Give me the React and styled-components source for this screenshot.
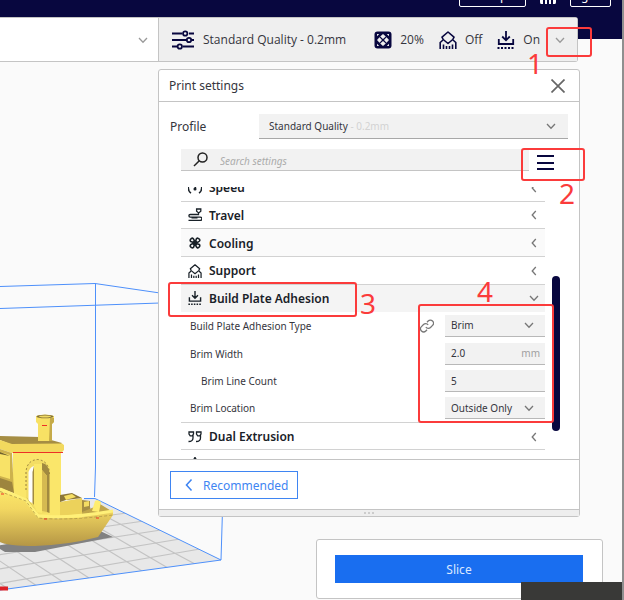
import React from "react";
import styled, { createGlobalStyle, css } from "styled-components";

const Global = createGlobalStyle`
  *, *::before, *::after { box-sizing: border-box; }
  body { margin: 0; background: #fafafa; }
  body, button, input, select { font-family: "Noto Sans", "Open Sans", sans-serif; }
  button, input, select { margin: 0; padding: 0; border: 0; color: inherit; background: none; border-radius: 0; outline: 0; }
`;

const NAVY = "#08073f";
const LINE = "#c4c4c4";
const BLUE = "#196ef0";
const RED = "#fb3b3b";
const SMALL = "10px";

const Page = styled.div`
  position: relative;
  min-height: 100vh;
  overflow: hidden;
  background: #fafafa;
  border-right: 2px solid #8f8f8f;
  color: #35353d;
  font-size: ${SMALL};
  line-height: 16px;
`;

const Scene = styled.svg`
  position: absolute;
  left: 0;
  bottom: 0;
  width: 240px;
  height: 330px;
`;

const TopBar = styled.header`
  display: flex;
  justify-content: flex-end;
  align-items: flex-start;
  gap: 13px;
  height: 39px;
  padding-right: 11px;
  background: ${NAVY};
  color: #fff;
`;

const TopButton = styled.button`
  width: ${(p) => p.$w}px;
  height: 22px;
  margin-top: -15px;
  border: 1px solid #fff;
  border-radius: 2px;
  font-size: 12px;
  line-height: 16px;
`;

const StageBar = styled.div`
  position: relative;
  z-index: 1;
  display: grid;
  grid-template-columns: 158px 1fr;
  height: 45px;
  margin: -22px 44px 0 0;
  border: 1px solid ${LINE};
  border-left: 0;
  border-radius: 0 3px 3px 0;
  background: #fff;
`;

const StageMenu = styled.button`
  display: flex;
  align-items: center;
  justify-content: flex-end;
  padding-right: 10px;
`;

const Summary = styled.button`
  display: flex;
  align-items: center;
  gap: 15px;
  padding: 0 12px;
  border-left: 1px solid ${LINE};
  background: #efefef;
  font-family: "Open Sans", "Noto Sans", sans-serif;
  font-size: 12px;
  text-align: left;
  white-space: nowrap;
`;

const SummaryItem = styled.span`
  display: flex;
  align-items: center;
  gap: 8px;
  margin-right: ${(p) => (p.$grow ? "auto" : "0")};
`;

const Panel = styled.section`
  position: relative;
  margin: 7px 42px 0 158px;
  border: 1px solid ${LINE};
  border-radius: 3px;
  background: #fff;
`;

const PanelHeader = styled.div`
  display: flex;
  align-items: center;
  justify-content: space-between;
  height: 32px;
  padding: 0 14px 0 10px;
  border-bottom: 1px solid ${LINE};
`;

const Title = styled.h1`
  margin: 0;
  font-size: 12px;
  font-weight: 400;
`;

const IconButton = styled.button`
  display: flex;
  align-self: ${(p) => p.$align || "auto"};
`;

const ProfileRow = styled.div`
  display: grid;
  grid-template-columns: 89px 1fr;
  align-items: center;
  margin: 12px 11px 10px;
  font-size: 12px;
`;

const ProfileSelect = styled.button`
  display: flex;
  align-items: center;
  height: 25px;
  padding: 0 12px 0 10px;
  border-bottom: 1px solid #a8a8a8;
  background: #f2f2f2;
  font-size: ${SMALL};

  svg { margin-left: auto; }
`;

const Faint = styled.span`
  color: #d3d3d3;
  white-space: pre;
`;

const SearchRow = styled.div`
  display: flex;
  gap: 8px;
  margin: 0 25px 16px 22px;
`;

const SearchBox = styled.label`
  display: flex;
  flex: 1;
  align-items: center;
  gap: 12px;
  height: 22px;
  padding-left: 12px;
  border-bottom: 1px solid ${LINE};
  background: #f2f2f2;
`;

const SearchInput = styled.input`
  flex: 1;
  min-width: 0;
  height: 20px;
  padding-top: 2px;
  font-size: ${SMALL};

  &::placeholder { color: #acacac; font-style: italic; opacity: 1; }
`;

const ListArea = styled.div`
  display: flex;
  height: 272px;
  overflow: hidden;
`;

const List = styled.div`
  display: grid;
  flex: 1;
  grid-auto-rows: 1fr;
  height: 304px;
  margin: -13px 0 0 22px;
`;

const Category = styled.button`
  display: grid;
  grid-template-columns: 14px 1fr 10px;
  align-items: center;
  gap: 7px;
  padding: 1px 6px 0 7px;
  border-bottom: 1px solid #d2d2d2;
  background: ${(p) => p.$bg || "#fff"};
  color: #192128;
  font-size: 12px;
  font-weight: 600;
  text-align: left;
  ${(p) => p.$open && css`border-bottom-color: transparent;`}
`;

const Setting = styled.div`
  display: grid;
  grid-template-columns: 1fr 14px 100px;
  align-items: center;
  gap: 11px;
  padding-left: ${(p) => (p.$child ? 20 : 9)}px;
  ${(p) => p.$last && css`border-bottom: 1px solid #d2d2d2;`}
`;

const Field = styled.span`
  display: flex;
  grid-column: 3;
  align-items: center;
  height: 22px;
  border-bottom: 1px solid #b8b8b8;
  background: #f2f2f2;
  padding: 0 5px 0 6px;

  > svg { flex: none; margin-right: 6px; pointer-events: none; }
`;

const FieldInput = styled.input`
  flex: 1;
  min-width: 0;
  height: 20px;
  font-size: ${SMALL};
`;

const FieldSelect = styled.select`
  flex: 1;
  min-width: 0;
  height: 20px;
  appearance: none;
  font-size: ${SMALL};
`;

const Unit = styled.span`
  color: #a0a0a0;
`;

const ScrollTrack = styled.div`
  display: flex;
  align-items: flex-end;
  width: 34px;
  padding: 0 0 28px 7px;
`;

const ScrollThumb = styled.div`
  width: 8px;
  height: 155px;
  border-radius: 4px;
  background: ${NAVY};
`;

const PanelFooter = styled.div`
  padding: 11px 11px 10px;
  border-top: 1px solid ${LINE};
`;

const Recommended = styled.button`
  display: flex;
  align-items: center;
  gap: 7px;
  height: 28px;
  padding: 0 9px 0 11px;
  border: 1px solid #3f85f2;
  color: #3f85f2;
  font-size: 12px;
`;

const Grip = styled.div`
  display: flex;
  align-items: center;
  justify-content: center;
  gap: 2px;
  height: 7px;
  border-top: 1px solid ${LINE};
  background: #eee;

  i { width: 2px; height: 2px; background: #ccc; }
`;

const SliceCard = styled.div`
  position: relative;
  width: 46%;
  min-width: 287px;
  margin: 22px 19px 0 auto;
  padding: 15px 19px 15px 18px;
  border: 1px solid ${LINE};
  border-radius: 3px;
  background: #fff;
`;

const SliceButton = styled.button`
  display: block;
  width: 100%;
  height: 28px;
  background: ${BLUE};
  color: #dbe8ff;
  font-size: 12px;
`;

const CornerStrip = styled.div`
  position: absolute;
  right: -2px;
  bottom: 0;
  width: 103px;
  height: 18px;
  background: #393937;
`;

const Mark = styled.div`
  position: absolute;
  top: ${(p) => p.$top}px;
  ${(p) => (p.$left !== undefined ? css`left: ${p.$left}px;` : css`right: ${p.$right}px;`)}
  width: ${(p) => p.$w}px;
  height: ${(p) => p.$h}px;
  border: 2px solid ${RED};
  border-radius: 3px;
  pointer-events: none;
`;

const MarkNumber = styled.span`
  position: absolute;
  top: ${(p) => p.$top}px;
  left: ${(p) => p.$left}px;
  color: ${RED};
  font-size: 28px;
  line-height: 28px;
`;

function Chevron({ dir = "down", size = 10, color = "#777", width = 1.3 }) {
  const d = dir === "down" ? "M1 3 5 7.2 9 3" : "M6.8 1 3.2 5 6.8 9";
  return (
    <svg width={size} height={size} viewBox="0 0 10 10" fill="none" stroke={color} strokeWidth={width} aria-hidden="true">
      <path d={d} />
    </svg>
  );
}

function SlidersIcon() {
  return (
    <svg width="24" height="20" viewBox="0 0 24 20" fill="none" stroke={NAVY} strokeWidth="1.800" aria-hidden="true">
      <path d="M1 3.500h10M18 3.500h5M1 10h14M21 10h2M1 16.500h5M12 16.500h11" />
      <circle cx="14.200" cy="3.500" r="2.200" />
      <circle cx="18" cy="10" r="2.200" />
      <circle cx="8.800" cy="16.500" r="2.200" />
    </svg>
  );
}

function InfillIcon() {
  return (
    <svg width="18" height="18" viewBox="0 0 18 18" fill={NAVY} aria-hidden="true">
      <rect x=".5" y=".5" width="17" height="17" rx="3" />
      <path
        fill="#efefef"
        d="M9 3 11.800 5.500 9 8 6.200 5.500zM9 10 11.800 12.500 9 15 6.200 12.500zM5.500 6.200 8 9 5.500 11.800 3 9zM12.500 6.200 15 9 12.500 11.800 10 9zM3 3h2.200L3 5.200zM15 3v2.200L12.800 3zM3 15v-2.200L5.200 15zM15 15h-2.200L15 12.800z"
      />
    </svg>
  );
}

function SupportIcon({ size = 18, color = NAVY }) {
  return (
    <svg width={size} height={size} viewBox="0 0 18 18" fill="none" stroke={color} strokeWidth="1.600" aria-hidden="true">
      <path d="M9 1 15 6.200 13.800 8.500 9 12.500 4.200 8.500 3 6.200z" strokeLinejoin="round" />
      <path d="M1.200 18v-6.500L4 9M16.800 18v-6.500L14 9M4.500 18v-4.500M7.500 18v-3M10.500 18v-3M13.500 18v-4.500" />
    </svg>
  );
}

function AdhesionIcon({ size = 18, color = NAVY }) {
  return (
    <svg width={size} height={size} viewBox="0 0 18 18" fill="none" stroke={color} strokeWidth="1.800" aria-hidden="true">
      <path d="M9 0v9M5.200 5.500 9 9.300 12.800 5.500M1.800 8v5h14.400V8" />
      <path d="M.5 17h17" strokeDasharray="2 1.500" />
    </svg>
  );
}

function SpeedIcon() {
  return (
    <svg width="14" height="14" viewBox="0 0 14 14" fill="none" stroke="#192128" strokeWidth="1.500" aria-hidden="true">
      <path d="M3 12A6 6 0 0 1 3 2M11 12a6 6 0 0 0 0-10M7 8l1-4" />
      <circle cx="7" cy="8" r=".8" fill="#192128" />
    </svg>
  );
}

function TravelIcon() {
  return (
    <svg width="14" height="14" viewBox="0 0 14 14" fill="none" stroke="#192128" strokeWidth="1.300" aria-hidden="true">
      <path d="M8.600 1h4.200v2.300L10.700 5 8.600 3.300zM10.500 5.200v1.300H2.200a1.300 1.300 0 0 0 0 2.600h10a1.600 1.600 0 0 1 0 3.300H.5M3.500 9.800h6" />
    </svg>
  );
}

function FanIcon() {
  return (
    <svg width="14" height="14" viewBox="0 0 14 14" fill="none" stroke="#192128" strokeWidth="1.600" strokeLinejoin="round" aria-hidden="true">
      <g transform="rotate(45 7 7)">
        <path d="M7 7 5 3Q5 1 7.500 1.200 9.500 1.500 8.500 4zM7 7l4-2q2 0 1.800 2.500Q12.500 9.500 10 8.500zM7 7l2 4q0 2-2.500 1.800Q4.500 12.500 5.500 10zM7 7 3 9Q1 9 1.200 6.500 1.500 4.500 4 5.500z" />
      </g>
      <circle cx="7" cy="7" r="1.700" fill="#192128" />
    </svg>
  );
}

function DualIcon() {
  return (
    <svg width="14" height="14" viewBox="0 0 14 14" fill="none" stroke="#192128" strokeWidth="1.300" aria-hidden="true">
      <path d="M1 2h4.500v2L4.300 5.800H2.200L1 4zM8.500 2H13v2l-1.200 1.800H9.700L8.500 4zM5 5v3q0 3.500-4.500 3.500M12.500 5v3q0 3.500-4.500 3.500" />
    </svg>
  );
}

function MeshIcon() {
  return (
    <svg width="14" height="14" viewBox="0 0 14 14" fill="none" stroke="#192128" strokeWidth="1.500" aria-hidden="true">
      <path d="M7 .5 13 12H1z" />
    </svg>
  );
}

function LinkIcon() {
  return (
    <svg width="14" height="14" viewBox="0 0 24 24" fill="none" stroke="#777" strokeWidth="2.200" aria-hidden="true">
      <path d="M10 14a5.500 5.500 0 0 0 8 .5l3.500-3.500a5.300 5.300 0 0 0-7.500-7.500L12 5.500M14 10a5.500 5.500 0 0 0-8-.5L2.500 13a5.300 5.300 0 0 0 7.500 7.500l2-2" />
    </svg>
  );
}

function BoatScene() {
  return (
    <Scene viewBox="0 270 240 330" aria-label="Boat model on the build plate">
      <defs>
        <linearGradient id="hull" x1="0" y1="0" x2="0" y2="1">
          <stop offset="0" stopColor="#fde86a" />
          <stop offset=".35" stopColor="#f2d761" />
          <stop offset="1" stopColor="#b59645" />
        </linearGradient>
        <clipPath id="plate"><path d="M-110 520 94 498 221 560 0 590-110 603z" /></clipPath>
      </defs>
      <path d="M-110 520 94 498 221 560 0 590-110 603z" fill="#e8e8e8" />
      <g clipPath="url(#plate)" stroke="#c3c3c3" strokeWidth="1.200">
        <path d="M-80 540 127 513M-80 553 144 521M-80 567 161 530M-80 582 180 539M-80 597 200 549" />
        <path d="M77 501 195 564M55 502 168 568M32 504 142 571M8 507 115 575M-17 509 89 578M-43 512 63 582M-70 514 37 586M-97 520 10 590" />
      </g>
      <path d="M-5 546 5 552 35 552 113 537 98 530z" fill="#818181" />
      <g fill="none" stroke="#4e90fa" strokeWidth="1">
        <path d="M0 286.500 95 283.500 160 293M0 308.500 160 303M95.500 283.500V467L94.500 497M222.500 510 221 560M84 498.500h11L221 560 0 590" />
      </g>
      <path d="M0 489 26 500 38 517Q70 521 113 511V515L98 537Q68 545 35 546 8 546 0 542z" fill="url(#hull)" />
      <path d="M13 453H61V506L82 513V518H38L26 500 13 493z" fill="#fae66a" />
      <path d="M0 436 40 437 62 443 59 446 12 445 0 440z" fill="#a58d43" />
      <path d="M0 440 12 444 62 443.500 64 445V450L61 453H12L0 449z" fill="#f2d95e" />
      <path d="M0 449 12 453 14 493 0 488z" fill="#cdb24d" />
      <path d="M0 452 10 455 10 479 0 476z" fill="#f8e267" />
      <path d="M0 452 10 456 0 454z" fill="#6f602f" />
      <path d="M0 478 12 482 14 493 0 488z" fill="#9d853e" />
      <path d="M26 500V472Q27 460 38 459.500 49 461 49.500 474V513L38 514z" fill="#f3dd64" />
      <path d="M28.500 501V472Q30 467 34 466V504z" fill="#fdfdfb" />
      <path d="M32.500 472V503L34 505V466zM26.500 497 31 504 37 513 30 504z" fill="#a18a40" />
      <path d="M34 464H42V513L37 512 34 505z" fill="#fbe86b" />
      <path d="M42 463Q49 464 49.500 474V513L47 512V476L42 470z" fill="#a18a40" />
      <path d="M42 470 47 476V512L42 511z" fill="#d5ba51" />
      <path d="M26 490V472Q27 460 38 459.500 49 461 49.500 474" fill="none" stroke="#99803d" strokeWidth="1" strokeDasharray="2 2" />
      <path d="M36 416Q45 413 54 416V422L52 424V441H38V424L36 422z" fill="#f8e164" />
      <path d="M50 418H54V422L52 424V441H49z" fill="#c5aa49" />
      <ellipse cx="45" cy="416.500" rx="8.500" ry="1.800" fill="#847139" />
      <ellipse cx="45" cy="416.500" rx="6" ry=".9" fill="#f0da62" />
      <path d="M60 502 82 498V514L60 516z" fill="#ecd25b" />
      <path d="M60 495 72 493 82 498 66 500 60 502z" fill="#8c773a" />
      <path d="M64 496 72 494 76 497 66 500z" fill="#f6df64" />
      <path d="M82 500 90 501V511L82 514z" fill="#a68e43" />
      <path d="M84 502 89 501V506L84 507z" fill="#f4dd63" />
      <path d="M100 504 113 512 82 515V512L92 508z" fill="#c0a54a" />
      <path d="M92 511 95 501Q98 499 101 502L99 512z" fill="#ffed70" />
      <path d="M0 489 26 500 38 516Q67 519 113 511" fill="none" stroke="#fff078" strokeWidth="3" />
      <path d="M0 491.500 26 501 38 518Q67 521 113 515" fill="none" stroke="#a88f45" strokeWidth=".7" strokeDasharray="3 2" />
      <path d="M13 452.500H63M42 425.500h5M44 519h3M96 518h3M1 494h3" stroke="#ed3026" strokeWidth="1.100" />
      <path d="M0 588.500h8" stroke="#db2027" strokeWidth="4" />
    </Scene>
  );
}

function CategoryRow({ icon, label, bg, open, hiddenLabel }) {
  return (
    <Category type="button" $bg={bg} $open={open} aria-expanded={!!open} aria-label={hiddenLabel}>
      {icon}
      <span>{label}</span>
      <Chevron dir={open ? "down" : "left"} />
    </Category>
  );
}

function SelectField({ id, value }) {
  return (
    <Field>
      <FieldSelect id={id} defaultValue={value}>
        <option>{value}</option>
      </FieldSelect>
      <Chevron />
    </Field>
  );
}

export default function App() {
  return (
    <>
      <Global />
      <Page>
        <BoatScene />
        <TopBar>
          <TopButton type="button" $w={67}>Marketplace</TopButton>
          <svg width="18" height="5" viewBox="0 0 18 5" fill="#fff" aria-hidden="true">
            <path d="M1 0h3v4H2Q1 4 1 2zM6 0h2v4H6zM10 0h2v4h-2zM14 0h3v2q0 2-1 2h-2z" />
          </svg>
          <TopButton type="button" $w={41}>Sign in</TopButton>
        </TopBar>

        <StageBar>
          <StageMenu type="button" aria-label="Choose material"><Chevron color="#999" /></StageMenu>
          <Summary type="button">
            <SummaryItem $grow><SlidersIcon />Standard Quality - 0.2mm</SummaryItem>
            <SummaryItem><InfillIcon />20%</SummaryItem>
            <SummaryItem><SupportIcon />Off</SummaryItem>
            <SummaryItem><AdhesionIcon />On</SummaryItem>
            <Chevron color="#999" />
          </Summary>
          <Mark $top={9} $right={-15} $w={46} $h={30}>
            <MarkNumber $top={20} $left={-21}>1</MarkNumber>
          </Mark>
        </StageBar>

        <Panel>
          <PanelHeader>
            <Title>Print settings</Title>
            <IconButton type="button" aria-label="Close">
              <svg width="14" height="14" viewBox="0 0 14 14" stroke="#666" strokeWidth="1.700" aria-hidden="true">
                <path d="M.5.500l13 13M13.500.500l-13 13" />
              </svg>
            </IconButton>
          </PanelHeader>

          <ProfileRow>
            <label htmlFor="profile">Profile</label>
            <ProfileSelect id="profile" type="button">
              Standard Quality<Faint> - 0.2mm</Faint><Chevron />
            </ProfileSelect>
          </ProfileRow>

          <SearchRow>
            <SearchBox>
              <svg width="15" height="15" viewBox="0 0 15 15" fill="none" stroke="#222" strokeWidth="1.500" aria-hidden="true">
                <circle cx="9.500" cy="5.500" r="4.500" />
                <path d="M6.300 8.700 1 14" />
              </svg>
              <SearchInput type="text" aria-label="Search settings" placeholder="Search settings" />
            </SearchBox>
            <IconButton type="button" aria-label="Setting visibility" $align="flex-end">
              <svg width="17" height="16" viewBox="0 0 17 16" stroke={NAVY} strokeWidth="2" aria-hidden="true">
                <path d="M0 1h17M0 8h17M0 14h17" />
              </svg>
            </IconButton>
          </SearchRow>

          <ListArea>
            <List>
              <CategoryRow icon={<SpeedIcon />} label="Speed" />
              <CategoryRow icon={<TravelIcon />} label="Travel" />
              <CategoryRow icon={<FanIcon />} label="Cooling" bg="#fafafa" />
              <CategoryRow icon={<SupportIcon size={14} color="#192128" />} label="Support" />
              <CategoryRow icon={<AdhesionIcon size={14} color="#192128" />} label="Build Plate Adhesion" bg="#f4f4f4" open />
              <Setting>
                <label htmlFor="type">Build Plate Adhesion Type</label>
                <LinkIcon />
                <SelectField id="type" value="Brim" />
              </Setting>
              <Setting>
                <label htmlFor="width">Brim Width</label>
                <Field>
                  <FieldInput id="width" type="text" defaultValue="2.0" />
                  <Unit>mm</Unit>
                </Field>
              </Setting>
              <Setting $child>
                <label htmlFor="lines">Brim Line Count</label>
                <Field><FieldInput id="lines" type="text" defaultValue="5" /></Field>
              </Setting>
              <Setting $last>
                <label htmlFor="location">Brim Location</label>
                <SelectField id="location" value="Outside Only" />
              </Setting>
              <CategoryRow icon={<DualIcon />} label="Dual Extrusion" />
              <CategoryRow icon={<MeshIcon />} hiddenLabel="Mesh Fixes" />
            </List>
            <ScrollTrack><ScrollThumb /></ScrollTrack>
          </ListArea>

          <PanelFooter>
            <Recommended type="button">
              <Chevron dir="left" size={14} color="#3f85f2" width={1.1} />
              Recommended
            </Recommended>
          </PanelFooter>
          <Grip><i /><i /><i /></Grip>

          <Mark $top={78} $right={-6} $w={64} $h={33}>
            <MarkNumber $top={29} $left={36}>2</MarkNumber>
          </Mark>
          <Mark $top={212} $left={9} $w={189} $h={35}>
            <MarkNumber $top={5} $left={190}>3</MarkNumber>
          </Mark>
          <Mark $top={234} $right={25} $w={136} $h={119}>
            <MarkNumber $top={-29} $left={57}>4</MarkNumber>
          </Mark>
        </Panel>

        <SliceCard>
          <SliceButton type="button">Slice</SliceButton>
        </SliceCard>
        <CornerStrip />
      </Page>
    </>
  );
}
